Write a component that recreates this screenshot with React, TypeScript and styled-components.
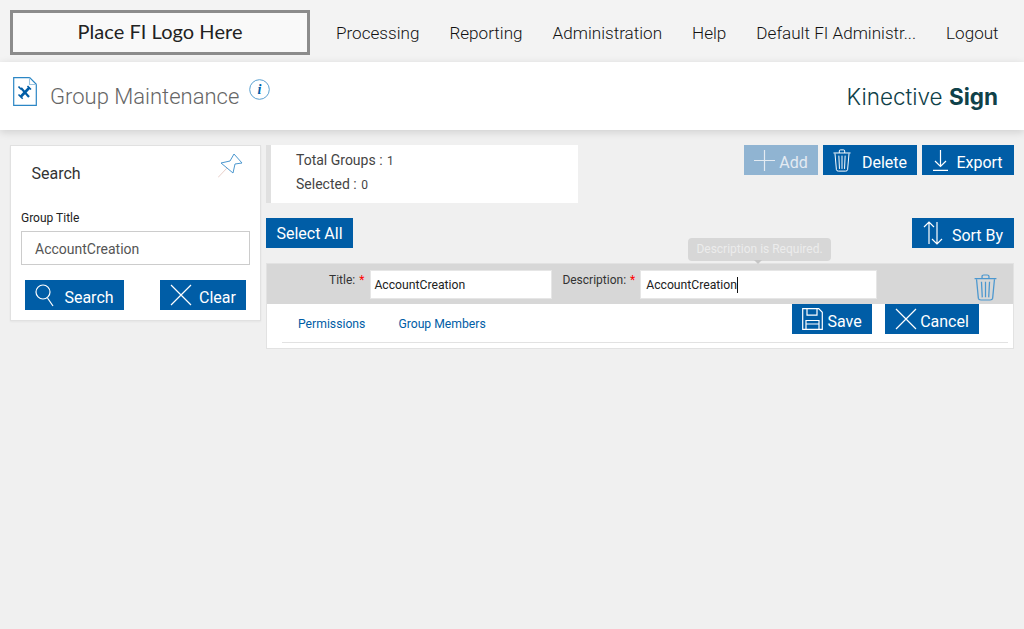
import React from "react";
import styled, { createGlobalStyle } from "styled-components";

const Global = createGlobalStyle`
  html, body { margin: 0; padding: 0; background: #f0f0f0; font-family: Roboto, "Liberation Sans", sans-serif; }
  #root { height: 629px; overflow: hidden; }
  * { box-sizing: border-box; }
`;

const TopBar = styled.div`
  height: 62px; background: #f3f3f3; display: flex; align-items: flex-start; padding: 10px 0 0 10px;
`;
const LogoBox = styled.div`
  width: 300px; height: 45px; border: 3px solid #8c8c8c; background: #f9f9f9;
  display: flex; align-items: center; justify-content: center;
  font: 400 20px Lato, Inter, sans-serif; letter-spacing: .05px; color: #222; padding-bottom: 3px;
`;
const Nav = styled.nav`
  display: flex; gap: 30px; margin-left: 26px; height: 45px; align-items: center;
  padding-top: 1px; font-weight: 300; font-size: 17.1px; color: #111; white-space: nowrap;
`;
const Header = styled.div`
  height: 68px; background: #fff; box-shadow: 0 2px 8px rgba(0,0,0,.14); display: flex;
  align-items: flex-start; padding: 15px 26px 0 13px; position: relative;
`;
const PageTitle = styled.h1`
  margin: 7px 0 0 13px; font-weight: 300; font-size: 22px; color: #666; line-height: 26px;
`;
const InfoIcon = styled.svg`margin: 2px 0 0 10px;`;
const Brand = styled.div`
  margin-left: auto; margin-top: 5px; font: 300 22.5px Inter, sans-serif; color: #0f4149;
  line-height: 30px; b { font-weight: 700; }
`;
const Main = styled.div`display: flex; gap: 5px; padding: 15px 10px 0;`;
const SearchCard = styled.aside`
  width: 251px; height: 176px; background: #fff; border: 1px solid #e1e1e1; box-shadow: 0 1px 2px rgba(0,0,0,.05);
  padding: 0 10px; position: relative;
`;
const SearchTitle = styled.div`
  font-size: 16px; color: #333; font-weight: 400; margin: 18px 0 0 10.5px; line-height: 20px;
`;
const Pin = styled.svg`position: absolute; left: 207px; top: 7px;`;
const FieldLabel = styled.div`font-size: 12px; color: #222; margin-top: 26px; line-height: 16px;`;
const SearchInput = styled.div`
  height: 34px; border: 1px solid #ccc; margin: 5px 0 0; padding: 2px 13px 0; display: flex; align-items: center;
  font-size: 14px; color: #555; width: 229px;
`;
const SearchActions = styled.div`display: flex; justify-content: space-between; padding: 15px 4px 0; width: 229px;`;
const Btn = styled.div<{ $w: number; $dim?: boolean; $gap?: number }>`
  height: 30px; width: ${p => p.$w}px; background: ${p => (p.$dim ? "#90b4d2" : "#005da6")};
  color: ${p => (p.$dim ? "#e4ebf2" : "#fff")}; display: flex; align-items: center; justify-content: center;
  gap: ${p => p.$gap ?? 6}px; font-size: 16px; font-weight: 400; white-space: nowrap; flex: none;
`;
const BtnLabel = styled.span`padding-top: 5px;`;
const Content = styled.section`flex: 1; display: flex; flex-direction: column;`;
const TopRow = styled.div`display: flex; justify-content: space-between; height: 73px;`;
const Stats = styled.div`
  width: 312px; height: 58px; background: #fff; border-left: 5px solid #e0e0e0; padding: 3px 0 0 25px;
  font-size: 14px; color: #444; line-height: 24px;
`;
const StatLine = styled.div`height: 24px; & + & { margin-top: -0.3px; }`;
const Num = styled.span`font-size: 12px; margin-left: 1px;`;
const Actions = styled.div`display: flex; gap: 5px;`;
const ToolRow = styled.div`display: flex; justify-content: space-between; height: 45px;`;
const Card = styled.div`
  height: 86px; background: #fff; border: 1px solid #e2e2e2; position: relative;
`;
const EditRow = styled.div`
  height: 40px; background: #d7d7d7; display: flex; align-items: flex-start; padding-top: 6px; padding-left: 62px;
`;
const FormLabel = styled.label`
  font-size: 12px; color: #333; line-height: 16px; margin-top: 2px; white-space: nowrap;
  i { color: #f00; font-style: normal; margin-left: 4px; }
`;
const TextBox = styled.div<{ $w: number; $m: number; $pad: number }>`
  width: ${p => p.$w}px; height: 29px; background: #fff; border: 1px solid #e6e6e6;
  font-size: 12.2px; color: #222; display: flex; align-items: center; padding: 0 ${p => p.$pad}px; margin-left: ${p => p.$m}px;
`;
const Caret = styled.span`width: 1px; height: 16px; background: #111;`;
const DescLabel = styled(FormLabel)`margin-left: 10px;`;
const RowTrash = styled.div`margin: 4px 0 0 97px; display: flex;`;
const Tooltip = styled.div`
  position: absolute; left: 421px; top: -26px; width: 143px; height: 23px; background: #d7d7d7; border-radius: 4px;
  color: #ececec; font-size: 12px; display: flex; align-items: center; justify-content: center; padding-bottom: 2px;
  &::after { content: ""; position: absolute; left: 66px; bottom: -3px; border: 4px solid transparent; border-top-color: #c6c6c6; border-bottom: 0; }
`;
const Lower = styled.div`display: flex; height: 39px; margin: 0 5px 0 15px; border-bottom: 1px solid #e2e2e2; position: relative;`;
const Tabs = styled.div`display: flex; gap: 33px; padding: 11px 0 0 16px; font-size: 12.2px; color: #005da6; line-height: 18px;`;
const LowerActions = styled.div`display: flex; gap: 13px; margin-left: auto; margin-right: 29px; height: 30px;`;

const S = { fill: "none", stroke: "#fff", strokeWidth: 1.2 };
const TrashIcon = ({ c, w, h }: { c: string; w: number; h: number }) => (
  <svg width={w} height={h} viewBox="0 0 20 26" preserveAspectRatio="none" fill="none" stroke={c} strokeWidth="1.1">
    <path d="M.5 4.5h19M7 4.5V2.2Q7 1 8.5 1h3Q13 1 13 2.2v2.3" />
    <path d="M2.2 5l1.6 18.5Q4 25 6 25h8q2 0 2.2-1.5L17.8 5" />
    <path d="M6.5 7.5l.7 15M10 7.5v15M13.5 7.5l-.7 15" />
  </svg>
);
const CloseIcon = () => (
  <svg width="22" height="22" viewBox="0 0 22 22" {...S}><path d="M1 1l20 20M21 1L1 21" /></svg>
);

export default function App() {
  return (
    <>
      <Global />
      <TopBar>
        <LogoBox>Place FI Logo Here</LogoBox>
        <Nav>
          <span>Processing</span><span>Reporting</span><span>Administration</span><span>Help</span>
          <span>Default FI Administr...</span><span>Logout</span>
        </Nav>
      </TopBar>
      <Header>
        <svg width="24" height="30" viewBox="0 0 24 30" fill="none">
          <path d="M.7 .7h16l6.6 6.6v21H.7z" fill="#fff" stroke="#2b86c5" strokeWidth="1.2" />
          <path d="M16.5 .7v6.8h6.8" stroke="#9cc4e0" strokeWidth="1.1" />
          <path d="M8 11l8 9" stroke="#005da6" strokeWidth="2.2" />
          <path d="M16.5 10.5L7.5 20" stroke="#005da6" strokeWidth="2.6" />
          <path d="M5.5 17.5l4.2 4.2M5.5 9.5l2.5 2.8M14.5 9l3.5 3.5" stroke="#005da6" strokeWidth="1.6" />
        </svg>
        <PageTitle>Group Maintenance</PageTitle>
        <InfoIcon width="21" height="21" viewBox="0 0 21 21">
          <circle cx="10.5" cy="10.5" r="9.8" fill="none" stroke="#5aa0d0" strokeWidth="1" />
          <text x="10.5" y="15" textAnchor="middle" fontFamily="Liberation Serif" fontStyle="italic" fontWeight="700" fontSize="14" fill="#005da6">i</text>
        </InfoIcon>
        <Brand>Kinective <b>Sign</b></Brand>
      </Header>
      <Main>
        <SearchCard>
          <SearchTitle>Search</SearchTitle>
          <Pin width="26" height="26" viewBox="0 0 26 26" fill="none" strokeWidth="1">
            <path d="M16 1l8 9-7 1-2 9L3 10l9-2z" stroke="#4b97cf" />
            <path d="M9 15L0 24.5" stroke="#e8cfc9" />
          </Pin>
          <FieldLabel>Group Title</FieldLabel>
          <SearchInput>AccountCreation</SearchInput>
          <SearchActions>
            <Btn $w={99} $gap={10}>
              <svg width="19" height="23" viewBox="0 0 19 23" {...S}><circle cx="8" cy="8" r="7" /><path d="M12.5 14l5.5 8" /></svg>
              <BtnLabel>Search</BtnLabel>
            </Btn>
            <Btn $w={86} $gap={7}><CloseIcon /><BtnLabel>Clear</BtnLabel></Btn>
          </SearchActions>
        </SearchCard>
        <Content>
          <TopRow>
            <Stats>
              <StatLine>Total Groups : <Num>1</Num></StatLine>
              <StatLine>Selected : <Num>0</Num></StatLine>
            </Stats>
            <Actions>
              <Btn $w={74} $dim $gap={4}>
                <svg width="21" height="21" viewBox="0 0 21 21" fill="none" stroke="#e4ebf2" strokeWidth="1.2"><path d="M10.5 0v21M0 10.5h21" /></svg>
                <BtnLabel>Add</BtnLabel>
              </Btn>
              <Btn $w={94} $gap={11}><TrashIcon c="#fff" w={18} h={23} /><BtnLabel>Delete</BtnLabel></Btn>
              <Btn $w={92} $gap={8}>
                <svg width="15" height="21" viewBox="0 0 15 21" {...S}><path d="M7.5 0v16M2 11l5.5 5.5L13 11M0 20.3h15" /></svg>
                <BtnLabel>Export</BtnLabel>
              </Btn>
            </Actions>
          </TopRow>
          <ToolRow>
            <Btn $w={87}>Select All</Btn>
            <Btn $w={102} $gap={9}>
              <svg width="20" height="24" viewBox="0 0 20 24" {...S}><path d="M6 23V1M1 6l5-5 5 5M14 1v22M9 18l5 5 5-5" /></svg>
              <BtnLabel>Sort By</BtnLabel>
            </Btn>
          </ToolRow>
          <Card>
            <Tooltip>Description is Required.</Tooltip>
            <EditRow>
              <FormLabel>Title:<i>*</i></FormLabel>
              <TextBox $w={182} $m={6} $pad={3}>AccountCreation</TextBox>
              <DescLabel>Description:<i>*</i></DescLabel>
              <TextBox $w={237} $m={5} $pad={5}>AccountCreation<Caret /></TextBox>
              <RowTrash><TrashIcon c="#4b97cf" w={23} h={27} /></RowTrash>
            </EditRow>
            <Lower>
              <Tabs><span>Permissions</span><span>Group Members</span></Tabs>
              <LowerActions>
                <Btn $w={80} $gap={4}>
                  <svg width="21" height="22" viewBox="0 0 21 22" {...S}><path d="M.7 .7h16l3.6 3.6v17H.7zM5 .7v6.5h10V.7M4 21V12.5h13V21M4 16h13" /></svg>
                  <BtnLabel>Save</BtnLabel>
                </Btn>
                <Btn $w={94} $gap={3}><CloseIcon /><BtnLabel>Cancel</BtnLabel></Btn>
              </LowerActions>
            </Lower>
          </Card>
        </Content>
      </Main>
    </>
  );
}
